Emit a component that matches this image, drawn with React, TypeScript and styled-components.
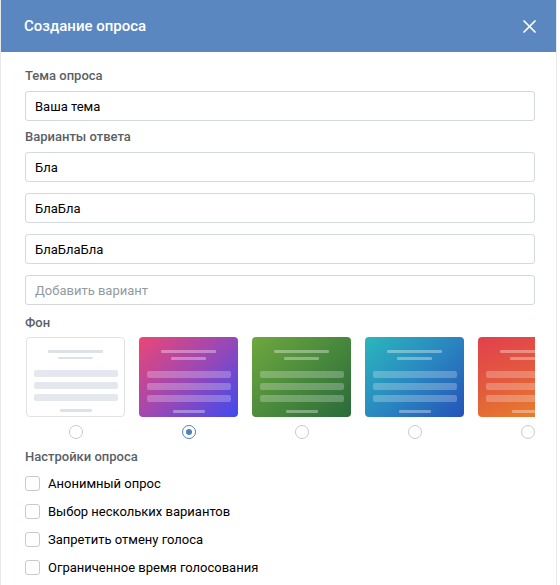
import React from "react";
import styled, { createGlobalStyle } from "styled-components";

const GlobalStyle = createGlobalStyle`
  body {
    margin: 0;
    background: #fff;
    font-family: Roboto, "Noto Sans", "Liberation Sans", sans-serif;
    -webkit-font-smoothing: antialiased;
  }
`;

const Modal = styled.div`
  width: 557px;
  height: 585px;
  box-sizing: border-box;
  border-left: 1px solid #e7e8ec;
  border-right: 1px solid #e7e8ec;
  background: #fff;
  overflow: hidden;
`;

const Header = styled.div`
  height: 52px;
  background: #5a87bf;
  display: flex;
  align-items: center;
  justify-content: space-between;
  padding: 0 17px 0 23px;
`;

const Title = styled.div`
  color: #fff;
  font-size: 15px;
  font-weight: 500;
`;

const CloseButton = styled.button`
  border: 0;
  background: none;
  padding: 0;
  width: 20px;
  height: 20px;
  display: flex;
  align-items: center;
  justify-content: center;
  cursor: pointer;
`;

const Body = styled.div`
  padding: 16px 21px 0 24px;
  display: flex;
  flex-direction: column;
`;

const Label = styled.div<{ $top?: number }>`
  font-size: 13px;
  line-height: 16px;
  font-weight: 500;
  color: #5a5f66;
  margin-top: ${(p) => p.$top ?? 0}px;
`;

const Inputs = styled.div`
  display: flex;
  flex-direction: column;
  gap: 11px;
  margin-top: 7px;
`;

const Input = styled.input`
  height: 30px;
  box-sizing: border-box;
  border: 1px solid #d3d9de;
  border-radius: 3px;
  padding: 0 9px;
  font-family: inherit;
  font-size: 13px;
  color: #000;
  outline: none;
  &::placeholder {
    color: #939aa1;
  }
`;

const Backgrounds = styled.div`
  display: flex;
  gap: 14px;
  margin-top: 6px;
  padding-left: 1px;
  overflow: hidden;
`;

const Option = styled.label`
  flex: 0 0 99px;
  display: flex;
  flex-direction: column;
  align-items: center;
  gap: 8px;
`;

const Card = styled.div<{ $bg: string; $light?: boolean }>`
  width: 99px;
  height: 80px;
  box-sizing: border-box;
  border-radius: 4px;
  background: ${(p) => p.$bg};
  border: ${(p) => (p.$light ? "1px solid #dfe2e7" : "none")};
  display: flex;
  flex-direction: column;
  align-items: center;
  padding-top: ${(p) => (p.$light ? 12 : 13)}px;
`;

const Line = styled.div<{ $w: number; $light?: boolean }>`
  width: ${(p) => p.$w}px;
  height: 3px;
  border-radius: 1px;
  background: ${(p) => (p.$light ? "#dde2e9" : "rgba(255,255,255,0.35)")};
  margin-bottom: 4px;
`;

const Bars = styled.div`
  display: flex;
  flex-direction: column;
  gap: 5px;
  margin: 7px 0 8px;
`;

const Bar = styled.div<{ $light?: boolean }>`
  width: 84px;
  height: 7px;
  border-radius: 2px;
  background: ${(p) => (p.$light ? "#e4e8ee" : "rgba(255,255,255,0.25)")};
`;

const Radio = styled.span<{ $checked?: boolean }>`
  width: 14px;
  height: 14px;
  box-sizing: border-box;
  border-radius: 50%;
  border: 1px solid ${(p) => (p.$checked ? "#5181b8" : "#c5cbd3")};
  display: flex;
  align-items: center;
  justify-content: center;
  &::after {
    content: "";
    width: 6px;
    height: 6px;
    border-radius: 50%;
    background: ${(p) => (p.$checked ? "#5181b8" : "transparent")};
  }
`;

const Checks = styled.div`
  display: flex;
  flex-direction: column;
  gap: 12px;
  margin-top: 10px;
`;

const CheckRow = styled.label`
  display: flex;
  align-items: center;
  gap: 8px;
  height: 16px;
  font-size: 13px;
  color: #000;
`;

const Box = styled.span`
  width: 15px;
  height: 15px;
  box-sizing: border-box;
  border: 1px solid #c5cbd3;
  border-radius: 3px;
`;

const backgrounds = [
  { bg: "#fff", light: true },
  { bg: "linear-gradient(135deg, #ec4675 0%, #9c48b4 50%, #3f4aee 100%)", checked: true },
  { bg: "linear-gradient(135deg, #6fa83f 0%, #4a8a3c 50%, #2a6a3b 100%)" },
  { bg: "linear-gradient(135deg, #2ab7bd 0%, #2a87c0 50%, #2453b9 100%)" },
  { bg: "linear-gradient(160deg, #e3404c 0%, #e25d3c 50%, #e98a26 100%)" },
];

const settings = [
  "Анонимный опрос",
  "Выбор нескольких вариантов",
  "Запретить отмену голоса",
  "Ограниченное время голосования",
];

export default function App() {
  return (
    <>
      <GlobalStyle />
      <Modal>
        <Header>
          <Title>Создание опроса</Title>
          <CloseButton>
            <svg width="13" height="13" viewBox="0 0 13 13">
              <path d="M1 1 L12 12 M12 1 L1 12" stroke="#fff" strokeWidth="1.7" strokeLinecap="round" />
            </svg>
          </CloseButton>
        </Header>
        <Body>
          <Label>Тема опроса</Label>
          <Inputs>
            <Input defaultValue="Ваша тема" />
          </Inputs>
          <Label $top={8}>Варианты ответа</Label>
          <Inputs>
            <Input defaultValue="Бла" />
            <Input defaultValue="БлаБла" />
            <Input defaultValue="БлаБлаБла" />
            <Input placeholder="Добавить вариант" />
          </Inputs>
          <Label $top={10}>Фон</Label>
          <Backgrounds>
            {backgrounds.map((b, i) => (
              <Option key={i}>
                <Card $bg={b.bg} $light={b.light}>
                  <Line $w={55} $light={b.light} />
                  <Line $w={35} $light={b.light} />
                  <Bars>
                    <Bar $light={b.light} />
                    <Bar $light={b.light} />
                    <Bar $light={b.light} />
                  </Bars>
                  <Line $w={32} $light={b.light} />
                </Card>
                <Radio $checked={b.checked} />
              </Option>
            ))}
          </Backgrounds>
          <Label $top={10}>Настройки опроса</Label>
          <Checks>
            {settings.map((s) => (
              <CheckRow key={s}>
                <Box />
                {s}
              </CheckRow>
            ))}
          </Checks>
        </Body>
      </Modal>
    </>
  );
}
